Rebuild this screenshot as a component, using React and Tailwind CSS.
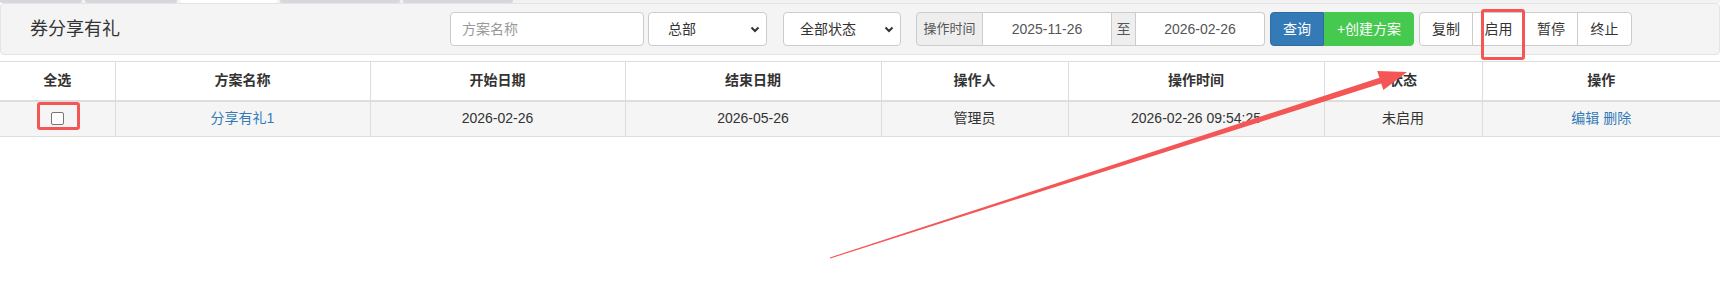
import React from "react";

const tabs = [
  { w: "w-[82px]", active: false },
  { w: "w-[92px]", active: false },
  { w: "w-[97px]", active: true },
  { w: "w-[120px]", active: false },
  { w: "w-[110px]", active: false },
];

const columns = [
  { label: "全选", w: "w-[115px]" },
  { label: "方案名称", w: "w-[255px]" },
  { label: "开始日期", w: "w-[255px]" },
  { label: "结束日期", w: "w-[256px]" },
  { label: "操作人", w: "w-[187px]" },
  { label: "操作时间", w: "w-[256px]" },
  { label: "状态", w: "w-[158px]" },
  { label: "操作", w: "w-[238px]" },
];

function Chevron() {
  return (
    <svg width="10" height="7" viewBox="0 0 10 7" className="shrink-0">
      <path d="M1.5 1.5 L5 5 L8.5 1.5" fill="none" stroke="#333" strokeWidth="2" />
    </svg>
  );
}

function FakeSelect({ label, className, textPad }) {
  return (
    <div
      className={`h-[34px] flex items-center justify-between border border-[#ccc] rounded-[4px] bg-white pr-[6px] text-[14px] text-[#333] ${className} ${textPad}`}
    >
      <span>{label}</span>
      <Chevron />
    </div>
  );
}

function App() {
  return (
    <div
      className="relative w-[1720px] h-[307px] bg-white overflow-hidden text-[#333]"
      style={{ fontFamily: '"Liberation Sans", "Noto Sans CJK SC", sans-serif' }}
    >
      {/* top tab strip */}
      <div className="flex h-[3px] bg-[#f2f2f2] gap-[3px]">
        {tabs.map((t, i) => (
          <div
            key={i}
            className={`${t.w} h-[3px] rounded-b-[2px] ${t.active ? "bg-white" : "bg-[#d7d8dd]"}`}
          />
        ))}
      </div>

      {/* header bar */}
      <div className="h-[52px] flex items-center bg-[#f4f4f4] border border-[#e4e4e4] rounded-[4px]">
        <div className="w-[449px] pl-[29px] text-[18px] text-[#333]">券分享有礼</div>
        <div className="flex items-center text-[14px]">
          <div className="w-[194px] h-[34px] flex items-center pl-[11px] border border-[#ccc] rounded-[4px] bg-white text-[#999]">
            方案名称
          </div>
          <FakeSelect label="总部" className="w-[119px] ml-[4px]" textPad="pl-[19px]" />
          <FakeSelect label="全部状态" className="w-[118px] ml-[16px]" textPad="pl-[16px]" />

          <div className="flex ml-[15px] h-[34px]">
            <div className="w-[67px] flex items-center justify-center bg-[#eee] border border-[#ccc] rounded-l-[4px] text-[13px] text-[#555]">
              操作时间
            </div>
            <div className="w-[128px] flex items-center justify-center bg-white border-y border-[#ccc] text-[#555]">
              2025-11-26
            </div>
            <div className="w-[25px] flex items-center justify-center bg-[#eee] border border-[#ccc] text-[#555]">
              至
            </div>
            <div className="w-[129px] flex items-center justify-center bg-white border-y border-r border-[#ccc] rounded-r-[4px] text-[#555]">
              2026-02-26
            </div>
          </div>

          <div className="flex ml-[5px] h-[34px]">
            <div className="w-[54px] flex items-center justify-center bg-[#337ab7] border border-[#2e6da4] rounded-l-[4px] text-white">
              查询
            </div>
            <div className="w-[90px] flex items-center justify-center bg-[#46c94f] border border-[#46c94f] rounded-r-[4px] text-white">
              +创建方案
            </div>
          </div>

          <div className="flex ml-[5px] h-[34px] border border-[#ccc] rounded-[4px] bg-white text-[#333]">
            <div className="w-[53px] flex items-center justify-center border-r border-[#ccc]">复制</div>
            <div className="w-[52px] flex items-center justify-center border-r border-[#ccc]">启用</div>
            <div className="w-[53px] flex items-center justify-center border-r border-[#ccc]">暂停</div>
            <div className="w-[53px] flex items-center justify-center">终止</div>
          </div>
        </div>
      </div>

      {/* table */}
      <table className="mt-[6px] w-[1720px] table-fixed border-collapse text-[14px]">
        <thead>
          <tr className="h-[39px] border-t border-[#ddd] border-b-2 border-b-[#ddd]">
            {columns.map((c) => (
              <th
                key={c.label}
                className={`${c.w} border-x border-[#ddd] first:border-l-0 last:border-r-0 font-bold text-[#333] text-center`}
              >
                {c.label}
              </th>
            ))}
          </tr>
        </thead>
        <tbody>
          <tr className="h-[36px] bg-[#f5f5f5] border-b border-[#ddd] text-center">
            <td className="border-r border-[#ddd]">
              <div className="w-[13px] h-[13px] mx-auto border border-[#767676] rounded-[2px] bg-white" />
            </td>
            <td className="border-r border-[#ddd] text-[#337ab7]">分享有礼1</td>
            <td className="border-r border-[#ddd]">2026-02-26</td>
            <td className="border-r border-[#ddd]">2026-05-26</td>
            <td className="border-r border-[#ddd]">管理员</td>
            <td className="border-r border-[#ddd]">2026-02-26 09:54:25</td>
            <td className="border-r border-[#ddd]">未启用</td>
            <td className="text-[#337ab7]">编辑 删除</td>
          </tr>
        </tbody>
      </table>

      {/* annotations */}
      <div className="absolute left-[37px] top-[102px] w-[43px] h-[28px] border-[3px] border-[#f45656] rounded-[3px]" />
      <div className="absolute left-[1481px] top-[9px] w-[44px] h-[51px] border-[3px] border-[#f45656] rounded-[3px]" />
      <svg className="absolute left-0 top-0 pointer-events-none" width="1720" height="307">
        <polygon
          points="829.8,257.5 1379.4,77.7 1377.2,71.1 1407,72 1383.4,90.1 1381.2,83.5 830.2,258.5"
          fill="#f45656"
        />
      </svg>
    </div>
  );
}

export default App;
